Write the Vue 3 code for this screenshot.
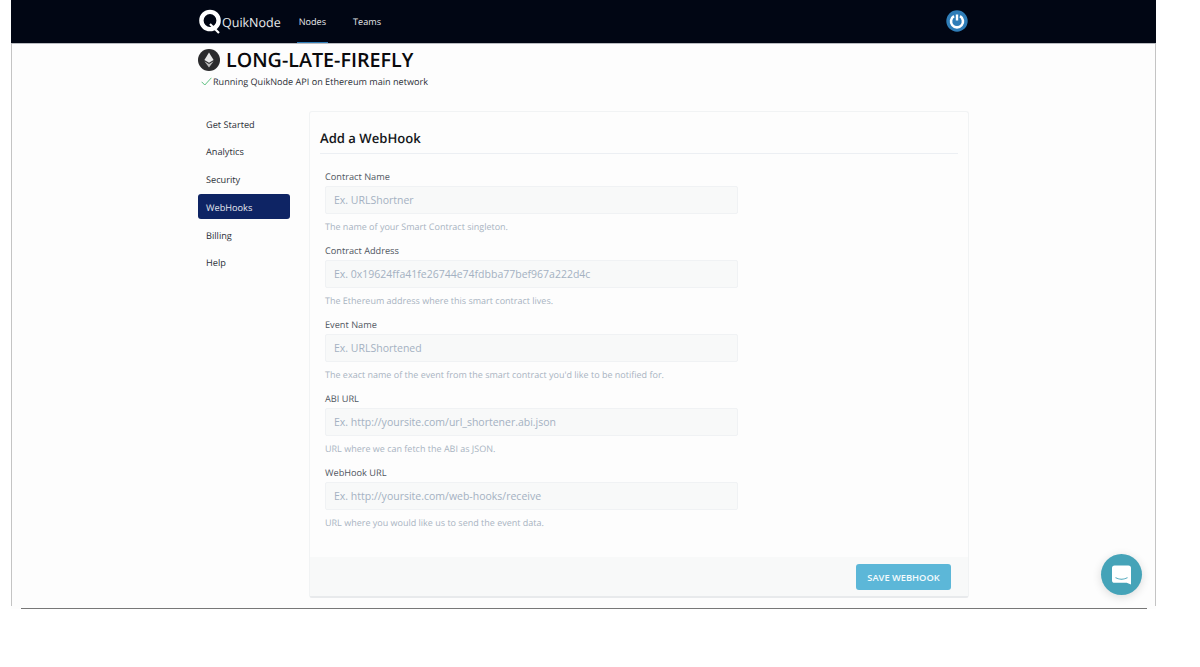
<template>
  <div class="page">
    <div class="window">
      <header class="topbar">
        <div class="brand">
          <svg class="brand-mark" width="24" height="26" viewBox="0 0 24 26">
            <circle cx="12" cy="11.5" r="8.6" fill="none" stroke="#fff" stroke-width="4.4" />
            <path d="M12 15 L21 24" stroke="#fff" stroke-width="2.2" fill="none" />
          </svg>
          <span class="brand-name">QuikNode</span>
        </div>
        <nav class="topnav">
          <a v-for="link in topLinks" :key="link" class="topnav-link" :class="{ current: link === 'Nodes' }">{{ link }}</a>
        </nav>
        <svg class="power" width="22" height="22" viewBox="0 0 22 22">
          <circle cx="11" cy="11" r="10.7" fill="#2f7db8" />
          <path d="M8 6.2 A6 6 0 1 0 14 6.2" fill="none" stroke="#fff" stroke-width="2.6" />
          <path d="M11 4.5 V10.5" stroke="#fff" stroke-width="2.4" />
        </svg>
      </header>

      <section class="node-head">
        <h1 class="node-title">
          <svg width="22" height="22" viewBox="0 0 22 22">
            <circle cx="11" cy="11" r="11" fill="#2b2b2d" />
            <path d="M11 3.6 L15.6 11 L11 13.7 L6.4 11 Z" fill="#e8e8e8" />
            <path d="M11 14.9 L15.6 12.2 L11 18.4 L6.4 12.2 Z" fill="#bdbdbd" />
          </svg>
          LONG-LATE-FIREFLY
        </h1>
        <p class="node-status">
          <svg class="check" width="11" height="9" viewBox="0 0 11 9">
            <path d="M.6 4.8 L3.8 8 L10.4 .8" fill="none" stroke="#5cc07f" stroke-width="1" />
          </svg>
          Running QuikNode API on Ethereum main network
        </p>
      </section>

      <div class="content">
        <aside class="sidebar">
          <a v-for="item in sideItems" :key="item" class="side-item" :class="{ active: item === 'WebHooks' }">{{ item }}</a>
        </aside>

        <form class="card" @submit.prevent>
          <h2 class="card-title">Add a WebHook</h2>
          <div class="fields">
            <div v-for="field in fields" :key="field.label" class="field">
              <label class="field-label">{{ field.label }}</label>
              <input class="field-input" type="text" :placeholder="field.placeholder" />
              <p class="field-help">{{ field.help }}</p>
            </div>
          </div>
          <div class="card-foot">
            <button class="save" type="submit">SAVE WEBHOOK</button>
          </div>
        </form>
      </div>

      <button class="chat" type="button" aria-label="Chat">
        <svg width="22" height="22" viewBox="0 0 22 22">
          <path d="M3 0 H19 A3 3 0 0 1 22 3 V22 L17 20 H3 A3 3 0 0 1 0 17 V3 A3 3 0 0 1 3 0 Z" fill="#fff" />
          <path d="M4 14 Q11 18 18 14" fill="none" stroke="#45a3b8" stroke-width="1.2" />
        </svg>
      </button>
    </div>
  </div>
</template>

<script setup>
const topLinks = ['Nodes', 'Teams']

const sideItems = ['Get Started', 'Analytics', 'Security', 'WebHooks', 'Billing', 'Help']

const fields = [
  {
    label: 'Contract Name',
    placeholder: 'Ex. URLShortner',
    help: 'The name of your Smart Contract singleton.'
  },
  {
    label: 'Contract Address',
    placeholder: 'Ex. 0x19624ffa41fe26744e74fdbba77bef967a222d4c',
    help: 'The Ethereum address where this smart contract lives.'
  },
  {
    label: 'Event Name',
    placeholder: 'Ex. URLShortened',
    help: "The exact name of the event from the smart contract you'd like to be notified for."
  },
  {
    label: 'ABI URL',
    placeholder: 'Ex. http://yoursite.com/url_shortener.abi.json',
    help: 'URL where we can fetch the ABI as JSON.'
  },
  {
    label: 'WebHook URL',
    placeholder: 'Ex. http://yoursite.com/web-hooks/receive',
    help: 'URL where you would like us to send the event data.'
  }
]
</script>

<style>
html,
body {
  margin: 0;
  background: #fff;
}
</style>

<style scoped>
.page {
  width: 1200px;
  height: 667px;
  overflow: hidden;
  font-family: "Open Sans", "Noto Sans", "Liberation Sans", sans-serif;
  text-rendering: geometricPrecision;
}

.window {
  position: relative;
  box-sizing: border-box;
  margin-left: 11px;
  padding: 0 1px;
  width: 1145px;
  height: 609px;
  background: #fdfdfd;
}

/* side edges stop short of the bottom line */
.window::before {
  content: "";
  position: absolute;
  top: 0;
  left: 0;
  right: 0;
  bottom: 3px;
  border-left: 1px solid #c4c4c4;
  border-right: 1px solid #c4c4c4;
  pointer-events: none;
}

.window::after {
  content: "";
  position: absolute;
  left: 10px;
  right: 9px;
  bottom: 0;
  height: 1px;
  background: #777;
}

/* header */
.topbar {
  position: relative;
  z-index: 1;
  display: flex;
  align-items: center;
  box-sizing: border-box;
  height: 44px;
  margin: 0 -1px;
  padding-left: 187px;
  background: #010614;
  border-bottom: 1px solid #b9bbc0;
}

.brand {
  display: flex;
  align-items: center;
  margin-top: 1px;
}

.brand-name {
  color: #e9ebee;
  font-size: 12.5px;
}

.topnav {
  display: flex;
  gap: 23px;
  margin-left: 16px;
  height: 100%;
}

.topnav-link {
  display: flex;
  align-items: center;
  box-sizing: border-box;
  padding: 0 2px;
  border-bottom: 1px solid transparent;
  color: #e6e8ec;
  font-size: 9.1px;
}

.topnav-link.current {
  border-bottom-color: #2f7db8;
}

.power {
  margin-left: auto;
  margin-right: 188px;
  margin-top: -1px;
}

/* node title */
.node-head {
  padding: 5px 0 0 186px;
}

.node-title {
  display: flex;
  align-items: center;
  gap: 6px;
  margin: 0;
  color: #0a0a0c;
  font-size: 19.7px;
  font-weight: 600;
  line-height: 22px;
}

.node-status {
  display: flex;
  align-items: center;
  gap: 1px;
  margin: 4px 0 0 3px;
  color: #2b2f36;
  font-size: 9.1px;
  line-height: 14px;
}

.check {
  margin-bottom: 1px;
}

/* body */
.content {
  display: flex;
  align-items: flex-start;
  gap: 19px;
  margin-top: 22px;
  padding-left: 186px;
}

.sidebar {
  display: flex;
  flex-direction: column;
  gap: 2.8px;
  width: 92px;
}

.side-item {
  display: flex;
  align-items: center;
  box-sizing: border-box;
  height: 25px;
  padding: 1px 0 0 8px;
  border-radius: 3px;
  color: #2c3038;
  font-size: 9.2px;
}

.side-item.active {
  background: #0e2464;
  color: #e3e6ee;
}

.card {
  box-sizing: border-box;
  display: flex;
  flex-direction: column;
  width: 660px;
  height: 487px;
  padding: 16px 10px 0;
  border: 1px solid #f1f3f4;
  border-bottom: 2px solid #e8eaec;
  border-radius: 3px;
  background: #fdfdfd;
}

.card-title {
  margin: 0;
  padding-bottom: 5px;
  border-bottom: 1px solid #eceff3;
  color: #14161a;
  font-size: 13.1px;
  font-weight: 600;
  line-height: 20px;
}

.fields {
  display: flex;
  flex-direction: column;
  padding: 16px 5px 0;
}

.field {
  height: 74px;
}

.field-label {
  display: block;
  color: #50565f;
  font-size: 9.2px;
  line-height: 14px;
}

.field-input {
  display: block;
  box-sizing: border-box;
  width: 413px;
  height: 28px;
  margin-top: 2px;
  padding: 0 8px;
  border: 1px solid #f0f2f4;
  border-radius: 2px;
  background: #f8f9f9;
  color: #a4b1c2;
  font-family: inherit;
  font-size: 10.5px;
  outline: none;
}

.field-input::placeholder {
  color: #a4b1c2;
  opacity: 1;
}

.field-help {
  margin: 6px 0 0;
  color: #a9b4c2;
  font-size: 9px;
  line-height: 14px;
}

.card-foot {
  display: flex;
  justify-content: flex-end;
  align-items: flex-start;
  box-sizing: border-box;
  height: 39px;
  margin: auto -10px 0;
  padding: 7px 17px 0 0;
  background: #f8f9f9;
}

.save {
  width: 95px;
  height: 26px;
  padding: 0;
  border: none;
  border-radius: 3px;
  background: #5cb7d8;
  color: #f4fbfd;
  font-family: inherit;
  font-size: 9.3px;
  font-weight: 600;
}

/* chat launcher floats over page */
.chat {
  position: absolute;
  right: 14px;
  bottom: 14px;
  display: flex;
  align-items: center;
  justify-content: center;
  width: 41px;
  height: 41px;
  padding: 0;
  border: none;
  border-radius: 50%;
  background: #45a3b8;
  box-shadow: 0 2px 10px rgba(0, 0, 0, 0.14);
}

.chat svg {
  width: 19px;
  height: 20px;
}
</style>
